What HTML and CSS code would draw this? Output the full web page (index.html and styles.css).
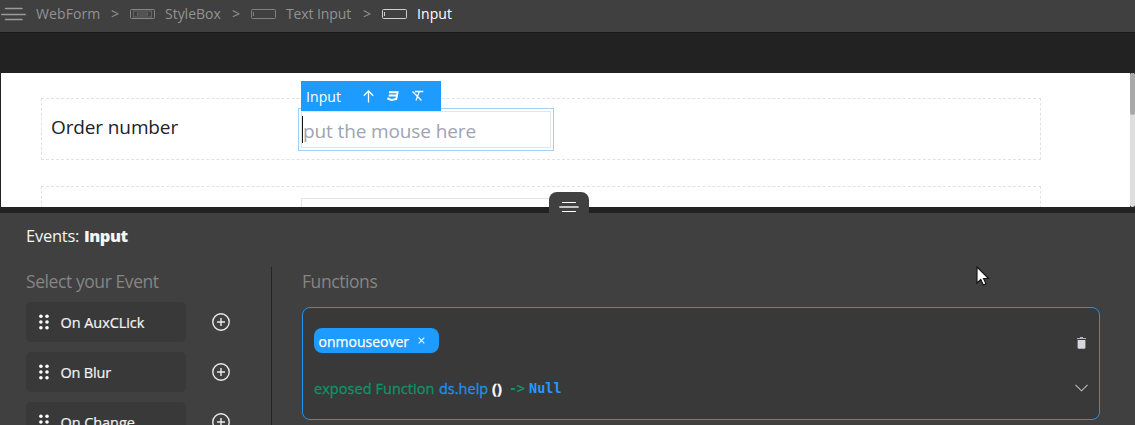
FILE: index.html
```html
<!DOCTYPE html>
<html lang="en">
<head>
<meta charset="utf-8">
<title>Events editor</title>
<link rel="stylesheet" href="styles.css">
</head>
<body>
<div class="app">
  <header class="crumbs">
    <svg class="crumb-icon" width="25" height="14" viewBox="0 0 25 14" stroke="#9a9a9a" stroke-width="1.6" stroke-linecap="round"><path d="M4.5 1.5h16.5M.8 7.5h23.4M4.500 12.500h16.500"/></svg>
    <span class="crumb web">WebForm</span><span class="sep">&gt;</span>
    <svg class="crumb-icon" width="25" height="10" viewBox="0 0 25 10" fill="none" stroke="#858585"><rect x=".5" y=".5" width="24" height="9" rx="1"/><rect x="3.5" y="2" width="18" height="6" stroke="#666"/><rect x="7.5" y="4" width="10" height="2" stroke="#666"/></svg>
    <span class="crumb style">StyleBox</span><span class="sep">&gt;</span>
    <svg class="crumb-icon" width="25" height="10" viewBox="0 0 25 10" fill="none" stroke="#808080"><rect x=".5" y=".5" width="24" height="9" rx="1"/><path d="M2.5 3v4"/></svg>
    <span class="crumb text">Text Input</span><span class="sep">&gt;</span>
    <svg class="crumb-icon" width="25" height="10" viewBox="0 0 25 10" fill="none" stroke="#d0d0d0"><rect x=".5" y=".5" width="24" height="9" rx="1"/><path d="M2.5 3v4"/></svg>
    <span class="crumb current">Input</span>
  </header>

  <main class="stage">
    <div class="canvas">
      <section class="form-row">
        <label class="field-label">Order number</label>
        <div class="selected">
          <div class="field"><i class="caret"></i><span class="placeholder">put the mouse here</span></div>
          <div class="toolbar">
            <span class="toolbar-name">Input</span>
            <svg width="12" height="13" viewBox="0 0 12 13" fill="none" stroke="#fff" stroke-width="1.3"><path d="M5.500 12.500V1M.8 5.700l4.700-4.700 4.700 4.700"/></svg>
            <svg width="12" height="11" viewBox="0 0 12 11" fill="none" stroke="#fff" stroke-width="1.9"><path d="M2 1.200h8.600L9.300 7.900 4.700 9 1.200 7.900l.2-1.200M1.700 4.500h8.100"/></svg>
            <svg width="13" height="12" viewBox="0 0 13 12" fill="none" stroke="#fff" stroke-width="1.300"><path d="M1.500 1.500l9 9M4 1.500h8.300M8.300 1.500L5 10.500"/></svg>
          </div>
        </div>
      </section>
      <section class="form-row"><div class="field next-field"></div></section>
    </div>
    <div class="scrollbar"><i></i></div>
  </main>

  <div class="splitter">
    <div class="handle"><svg width="20" height="12" viewBox="0 0 20 12" stroke="#fff" stroke-linecap="round"><path d="M3.500 1.500h13M3.500 10.500h13" stroke-width="1.100"/><path d="M1 6h18" stroke="#c4c4c4" stroke-width="1.800"/></svg></div>
  </div>

  <section class="panel">
    <h1 class="title"><span class="title-kind">Events:</span><b>Input</b></h1>
    <div class="columns">
      <div class="events">
        <h2 class="heading select">Select your Event</h2>
        <div class="event"><div class="chip"><svg class="grip" width="10" height="16" viewBox="0 0 10 16" fill="#fff"><circle cx="1.9" cy="2.2" r="1.8"/><circle cx="8" cy="2.2" r="1.8"/><circle cx="1.9" cy="8" r="1.8"/><circle cx="8" cy="8" r="1.8"/><circle cx="1.9" cy="13.7" r="1.8"/><circle cx="8" cy="13.7" r="1.8"/></svg><span>On AuxCLick</span></div><svg class="plus" width="18" height="18" viewBox="0 0 18 18" fill="none" stroke="#ececec" stroke-width="1.4"><circle cx="9" cy="9" r="8.2"/><path d="M9 5v8M5 9h8"/></svg></div>
        <div class="event"><div class="chip"><svg class="grip" width="10" height="16" viewBox="0 0 10 16" fill="#fff"><circle cx="1.9" cy="2.2" r="1.8"/><circle cx="8" cy="2.2" r="1.8"/><circle cx="1.9" cy="8" r="1.8"/><circle cx="8" cy="8" r="1.8"/><circle cx="1.9" cy="13.7" r="1.8"/><circle cx="8" cy="13.7" r="1.8"/></svg><span class="short">On Blur</span></div><svg class="plus" width="18" height="18" viewBox="0 0 18 18" fill="none" stroke="#ececec" stroke-width="1.4"><circle cx="9" cy="9" r="8.2"/><path d="M9 5v8M5 9h8"/></svg></div>
        <div class="event"><div class="chip"><svg class="grip" width="10" height="16" viewBox="0 0 10 16" fill="#fff"><circle cx="1.9" cy="2.2" r="1.8"/><circle cx="8" cy="2.2" r="1.8"/><circle cx="1.9" cy="8" r="1.8"/><circle cx="8" cy="8" r="1.8"/><circle cx="1.9" cy="13.7" r="1.8"/><circle cx="8" cy="13.7" r="1.8"/></svg><span>On Change</span></div><svg class="plus" width="18" height="18" viewBox="0 0 18 18" fill="none" stroke="#ececec" stroke-width="1.4"><circle cx="9" cy="9" r="8.2"/><path d="M9 5v8M5 9h8"/></svg></div>
      </div>
      <div class="functions">
        <h2 class="heading">Functions</h2>
        <article class="function">
          <div class="function-top">
            <div class="pill"><span>onmouseover</span><svg width="7" height="7" viewBox="0 0 7 7" stroke="#fff" stroke-width="1.100"><path d="M.7.7l5.6 5.6M6.3.7L.7 6.3"/></svg></div>
            <svg class="trash" width="9" height="12" viewBox="0 0 9 12"><path d="M3 0h3v1h3v1H0V1h3z" fill="#b5b5ba"/><path d="M.6 3h7.800v7.600q0 1.200-1.200 1.200H1.800q-1.200 0-1.200-1.200z" fill="#d6d6dc"/></svg>
          </div>
          <div class="function-sig">
            <span class="kind">exposed Function</span><span class="name">ds.help</span><span class="parens">()</span><span class="arrow">-&gt;</span><span class="result">Null</span>
            <svg class="chevron" width="13" height="8" viewBox="0 0 13 8" fill="none" stroke="#bdbdbd" stroke-width="1.1"><path d="M.5.8l6 6 6-6"/></svg>
          </div>
        </article>
      </div>
    </div>
  </section>
  <svg class="pointer" width="14" height="21" viewBox="0 0 14 21"><path d="M1 1v16l3.800-3.500 2.500 5.500 2.700-1.200-2.500-5.300h5z" fill="#fff" stroke="#111" stroke-width="1.100"/></svg>
</div>
</body>
</html>
```
FILE: styles.css
```css
* { box-sizing: border-box; }
body { margin: 0; font-family: "Open Sans", "Noto Sans", sans-serif; background: #404040; }
svg { display: block; flex: none; }
.app { position: relative; width: 1135px; height: 425px; overflow: hidden; display: flex; flex-direction: column; white-space: nowrap; }

.crumbs { flex: none; height: 33px; display: flex; align-items: center; padding: 0 0 5px 1px; background: #404040; border-bottom: 1px solid #191919; font-size: 14px; color: #929292; }
.crumb { flex: none; margin-left: 10px; }
.web { width: 65px; letter-spacing: .1px; }
.style { width: 57px; letter-spacing: -.02px; }
.text { width: 67px; letter-spacing: -.1px; }
.current { color: #fff; margin-left: 10px; letter-spacing: .1px; }
.sep { width: 19px; margin-left: 10px; font-size: 14px; }

.stage { flex: none; height: 174px; padding: 40px 0 0 1px; display: flex; background: #222; overflow: hidden; }
.canvas { width: 1129px; height: 134px; padding: 25px 0 0 40px; background: #fff; overflow: hidden; display: flex; flex-direction: column; gap: 26px; }
.form-row { flex: none; width: 1000px; height: 62px; border: 1px dashed #e2e2e4; display: flex; }
.field-label { width: 256px; padding: 15px 0 0 9px; font-size: 19px; line-height: 27px; letter-spacing: -.12px; color: #20222c; }
.selected { position: relative; flex: none; margin-top: 9px; width: 256px; height: 43px; border: 1px solid #9fd0fb; padding: 2px; }
.field { width: 250px; height: 37px; border: 1px solid #dfe6ef; display: flex; align-items: center; }
.next-field { margin: 11px 0 0 259px; }
.caret { width: 1px; height: 27px; background: #15161c; }
.placeholder { font-size: 19px; letter-spacing: -.12px; color: #a0a3b1; padding-top: 2px; }
.toolbar { position: absolute; left: 2px; top: -28px; width: 140px; height: 30px; background: #1e9bff; color: #fff; display: flex; align-items: center; gap: 12px; padding-left: 5px; font-size: 14px; }
.toolbar-name { width: 45px; letter-spacing: .1px; }
.scrollbar { width: 5px; height: 134px; background: #dedede; border-radius: 3px; }
.scrollbar i { display: block; height: 42px; background: #a9a9a9; border-radius: 3px; }

.splitter { position: relative; flex: none; height: 6px; background: #222; }
.handle { position: absolute; left: 549px; top: -15px; width: 40px; height: 22px; padding: 9px 10px 0; background: #404040; border-radius: 8px 8px 0 0; }

.panel { flex: 1; min-height: 0; padding: 12px 0 0 26px; background: #404040; }
.title { display: flex; margin: 0; font-size: 16.5px; line-height: 22px; font-weight: 400; color: #f4f4f4; }
.title-kind { width: 58px; letter-spacing: -.25px; }
.title b { font-weight: 800; letter-spacing: -.5px; }
.columns { display: flex; margin-top: 20px; }
.events { flex: none; width: 246px; height: 190px; border-right: 1px solid #242424; }
.heading { margin: 0; height: 35px; font-size: 17.5px; letter-spacing: -.42px; line-height: 28px; font-weight: 400; color: #858585; }
.event { height: 40px; margin-bottom: 10px; display: flex; align-items: center; gap: 26px; }
.chip { width: 160px; height: 40px; border-radius: 5px; background: #393939; display: flex; align-items: center; gap: 12px; padding-left: 12.5px; font-size: 14.5px; letter-spacing: -.07px; color: #f2f2f5; -webkit-text-stroke: .2px #f2f2f5; }
.short { letter-spacing: -.2px; }
.functions { padding-left: 30px; }
.functions .heading { height: 40px; }
.function { width: 798px; height: 113px; border: 1px solid #2492eb; border-radius: 8px; background: #393939; padding: 20px 11px; }
.function-top, .function-sig { display: flex; align-items: center; }
.pill { width: 125px; height: 25px; border-radius: 8px; background: #1e9bff; color: #fff; display: flex; align-items: center; padding-left: 4.5px; font-size: 14px; -webkit-text-stroke: .25px #fff; }
.pill span { width: 99px; padding-top: 2px; }
.pill svg { margin-left: .5px; }
.trash { margin: 5px 2px 0 auto; }
.function-sig { margin-top: 22px; height: 26px; font-size: 14.5px; -webkit-text-stroke: .3px; }
.kind { width: 125px; color: #0d9466; letter-spacing: .05px; }
.name { width: 53px; color: #218fe9; }
.parens { width: 17px; color: #fff; font-weight: 700; }
.arrow { width: 20px; color: #0d9466; font: 700 13.5px "DejaVu Sans Mono", monospace; letter-spacing: -.3px; -webkit-text-stroke: 0; }
.result { color: #2799ff; font: 700 13.5px "DejaVu Sans Mono", monospace; -webkit-text-stroke: 0; }
.chevron { margin-left: auto; }
.pointer { position: absolute; left: 976px; top: 266px; }
```
